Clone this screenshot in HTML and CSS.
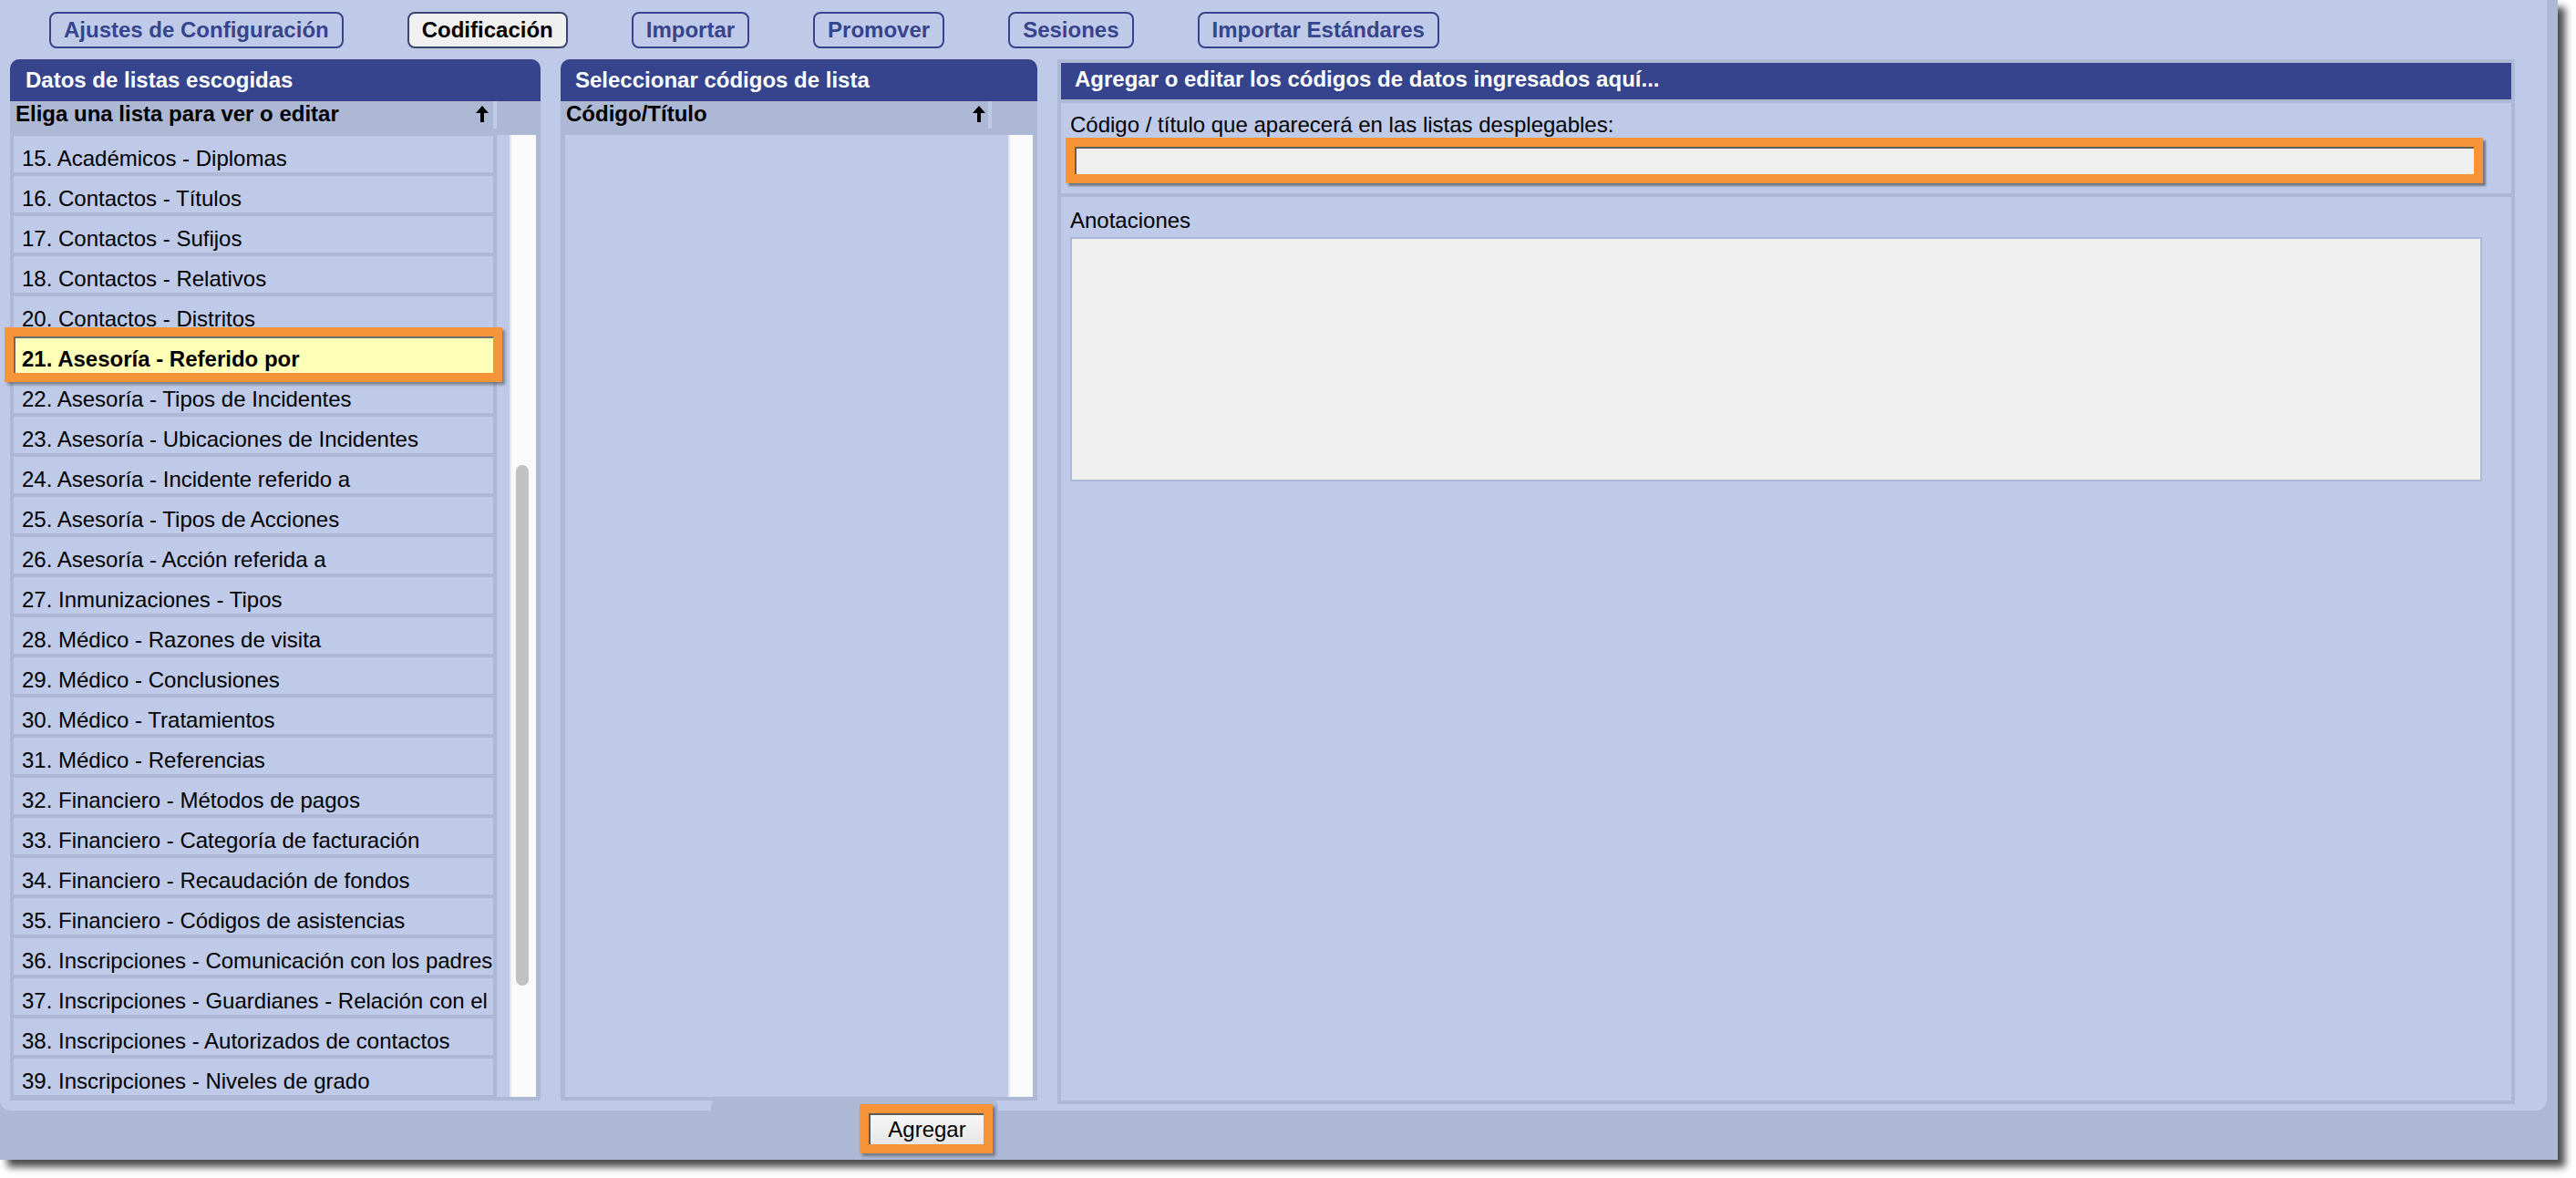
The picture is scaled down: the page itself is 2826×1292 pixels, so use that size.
FILE: index.html
```html
<!DOCTYPE html>
<html>
<head>
    <title>Codificación</title>
    <meta charset="utf-8">
    <link rel="stylesheet" href="styles.css">
</head>
<body>
    <div class="window">
        <div class="main">
            <div class="tabs">
                <div class="tab">Ajustes de Configuración</div>
                <div class="tab active">Codificación</div>
                <div class="tab">Importar</div>
                <div class="tab">Promover</div>
                <div class="tab">Sesiones</div>
                <div class="tab">Importar Estándares</div>
            </div>

            <div class="panels">
                <!-- listas -->
                <div class="panel lists">
                    <div class="panel-title">Datos de listas escogidas</div>
                    <div class="col-head">
                        <div class="col-name">
                            <span>Eliga una lista para ver o editar</span>
                            <svg class="sort" width="16" height="20" viewBox="0 0 16 20"><path d="M8 1 L15 9 L1 9 Z" fill="#000"/><rect x="6" y="8" width="4" height="11" fill="#000"/></svg>
                        </div>
                        <div class="col-sep"></div>
                        <div class="col-rest"></div>
                    </div>
                    <div class="panel-body">
                        <div class="rows">
                            <div class="row">15. Académicos - Diplomas</div>
                            <div class="row">16. Contactos - Títulos</div>
                            <div class="row">17. Contactos - Sufijos</div>
                            <div class="row">18. Contactos - Relativos</div>
                            <div class="row">20. Contactos - Distritos</div>
                            <div class="row sel">21. Asesoría - Referido por</div>
                            <div class="row">22. Asesoría - Tipos de Incidentes</div>
                            <div class="row">23. Asesoría - Ubicaciones de Incidentes</div>
                            <div class="row">24. Asesoría - Incidente referido a</div>
                            <div class="row">25. Asesoría - Tipos de Acciones</div>
                            <div class="row">26. Asesoría - Acción referida a</div>
                            <div class="row">27. Inmunizaciones - Tipos</div>
                            <div class="row">28. Médico - Razones de visita</div>
                            <div class="row">29. Médico - Conclusiones</div>
                            <div class="row">30. Médico - Tratamientos</div>
                            <div class="row">31. Médico - Referencias</div>
                            <div class="row">32. Financiero - Métodos de pagos</div>
                            <div class="row">33. Financiero - Categoría de facturación</div>
                            <div class="row">34. Financiero - Recaudación de fondos</div>
                            <div class="row">35. Financiero - Códigos de asistencias</div>
                            <div class="row">36. Inscripciones - Comunicación con los padres</div>
                            <div class="row">37. Inscripciones - Guardianes - Relación con el</div>
                            <div class="row">38. Inscripciones - Autorizados de contactos</div>
                            <div class="row">39. Inscripciones - Niveles de grado</div>
                        </div>
                        <div class="gutter"></div>
                        <div class="track"><div class="thumb"></div></div>
                    </div>
                </div>

                <!-- codigos -->
                <div class="panel codes">
                    <div class="panel-title">Seleccionar códigos de lista</div>
                    <div class="col-head">
                        <div class="col-name">
                            <span>Código/Título</span>
                            <svg class="sort" width="16" height="20" viewBox="0 0 16 20"><path d="M8 1 L15 9 L1 9 Z" fill="#000"/><rect x="6" y="8" width="4" height="11" fill="#000"/></svg>
                        </div>
                        <div class="col-sep"></div>
                        <div class="col-rest"></div>
                    </div>
                    <div class="panel-body">
                        <div class="empty"></div>
                        <div class="track"></div>
                    </div>
                </div>

                <!-- editar -->
                <div class="editor">
                    <div class="editor-title">Agregar o editar los códigos de datos ingresados aquí...</div>
                    <div class="section first">
                        <div class="label">Código / título que aparecerá en las listas desplegables:</div>
                        <div class="field"><input type="text"></div>
                    </div>
                    <div class="section">
                        <div class="label">Anotaciones</div>
                        <textarea class="notes"></textarea>
                    </div>
                </div>
            </div>
        </div>

        <div class="footer">
            <button class="btn">Agregar</button>
        </div>
    </div>
</body>
</html>
```

FILE: styles.css
```css
* {
    box-sizing: border-box;
    margin: 0px;
    padding: 0px;
}

html, body {
    height: 1292px;
    overflow: hidden;
}

body {
    background-color: #ffffff;
    font-family: "Liberation Sans", Arial, sans-serif;
    font-size: 24px;
    color: #000000;
}

.window {
    width: 2806px;
    height: 1272px;
    background-color: #adb8d4;
    box-shadow: 8px 8px 8px rgba(0, 0, 0, 0.7);
}

.main {
    width: 2794px;
    height: 1218px;
    background-color: #bfcae8;
    border-radius: 0 0 12px 12px;
    padding: 13px 35px 7px 11px;
    display: flex;
    flex-direction: column;
}

/* pestañas */
.tabs {
    display: flex;
    gap: 70px;
    padding-left: 43px;
    margin-bottom: 12px;
}

.tab {
    height: 40px;
    line-height: 36px;
    padding: 0 14px;
    border: 2px solid #35448c;
    border-radius: 8px;
    font-weight: bold;
    color: #35448c;
    white-space: nowrap;
}

.tab.active {
    background-color: #f0f0f0;
    border-color: #3c4470;
    color: #000000;
}

.panels {
    flex: 1;
    min-height: 0;
    display: flex;
    gap: 22px;
}

/* paneles de lista */
.panel {
    display: flex;
    flex-direction: column;
    background-color: #adb8d4;
    border-radius: 10px 10px 0 0;
    margin-bottom: 4px;
}

.lists {
    width: 582px;
}

.codes {
    width: 523px;
}

.panel-title {
    height: 46px;
    line-height: 46px;
    padding-left: 17px;
    background-color: #35448c;
    border-radius: 10px 10px 0 0;
    color: #ffffff;
    font-weight: bold;
    white-space: nowrap;
}

.codes .panel-title {
    padding-left: 16px;
}

.col-head {
    display: flex;
    height: 37px;
    background-color: #adb8d4;
    font-weight: bold;
}

.col-name {
    display: flex;
    justify-content: space-between;
    align-items: flex-start;
    padding: 0 4px 0 6px;
    line-height: 28px;
    white-space: nowrap;
}

.lists .col-name {
    width: 530px;
}

.codes .col-name {
    width: 469px;
    padding-right: 2px;
}

.sort {
    margin-top: 4px;
}

.col-sep {
    width: 4px;
    height: 30px;
    background-color: #bfcae8;
}

.col-rest {
    flex: 1;
}

.panel-body {
    flex: 1;
    min-height: 0;
    display: flex;
    padding: 0 5px 4px 4px;
}

.codes .panel-body {
    padding-left: 5px;
}

.rows {
    width: 530px;
    padding-top: 1px;
    border-right: 4px solid #adb8d4;
    background-color: #adb8d4;
    overflow-x: visible;
    overflow-y: clip;
}

.row {
    height: 40px;
    margin-bottom: 4px;
    padding: 10px 0 0 9px;
    line-height: 30px;
    background-color: #bfcae8;
    white-space: nowrap;
    overflow: hidden;
}

.row.sel {
    position: relative;
    z-index: 2;
    overflow: visible;
    background-color: #ffffb8;
    font-weight: bold;
    box-shadow: inset 2px 2px 0 #6b6b6b, 0 0 0 10px #f7943a, 3px 3px 3px 10px rgba(40, 40, 40, 0.45);
}

.gutter {
    width: 14px;
    background-color: #bfcae8;
}

.track {
    width: 29px;
    background-color: #fafafa;
    border-left: 2px solid #e3e7f3;
}

.codes .track {
    width: 27px;
}

.thumb {
    width: 14px;
    height: 571px;
    margin: 362px 0 0 5px;
    border-radius: 7px;
    background-color: #c1c1c1;
}

.empty {
    flex: 1;
    background-color: #bfcae8;
}

/* editor */
.editor {
    flex: 1;
    display: flex;
    flex-direction: column;
    border: 4px solid #adb8d4;
    background-color: #bfcae8;
}

.editor-title {
    height: 44px;
    line-height: 36px;
    padding-left: 15px;
    background-color: #35448c;
    border-bottom: 4px solid #adb8d4;
    color: #ffffff;
    font-weight: bold;
    white-space: nowrap;
}

.section {
    padding: 12px 10px 0 10px;
}

.section.first {
    height: 103px;
    padding: 10px 0 0 0;
    border-bottom: 4px solid #adb8d4;
}

.label {
    line-height: 28px;
    white-space: nowrap;
}

.first .label {
    padding-left: 10px;
}

.field {
    width: 1555px;
    margin-left: 5px;
    border: 10px solid #f7943a;
    box-shadow: 3px 3px 2px rgba(40, 40, 40, 0.5);
}

.field input {
    display: block;
    width: 100%;
    height: 30px;
    border: 0;
    border-top: 2px solid #5f5f5f;
    border-left: 2px solid #5f5f5f;
    background-color: #efefef;
    outline: none;
}

.notes {
    display: block;
    width: 1549px;
    height: 268px;
    margin-top: 4px;
    border: 2px solid #adb8d4;
    background-color: #f0f0f0;
    resize: none;
    outline: none;
}

/* pie */
.footer {
    position: relative;
    height: 54px;
    padding: 3px 0 0 953px;
}

.footer::before {
    content: "";
    position: absolute;
    left: 780px;
    top: -15px;
    width: 315px;
    height: 20px;
    border-radius: 12px 12px 0 0;
    background-color: #adb8d4;
}

.btn {
    position: relative;
    z-index: 1;
    display: block;
    width: 126px;
    height: 34px;
    border: 0;
    border-top: 2px solid #5a5a5a;
    border-left: 2px solid #5a5a5a;
    background: linear-gradient(#f6f6f6, #e6e6e6);
    font-family: "Liberation Sans", Arial, sans-serif;
    font-size: 24px;
    color: #000000;
    box-shadow: 0 0 0 10px #f7943a, 3px 3px 3px 10px rgba(40, 40, 40, 0.45);
}
```
